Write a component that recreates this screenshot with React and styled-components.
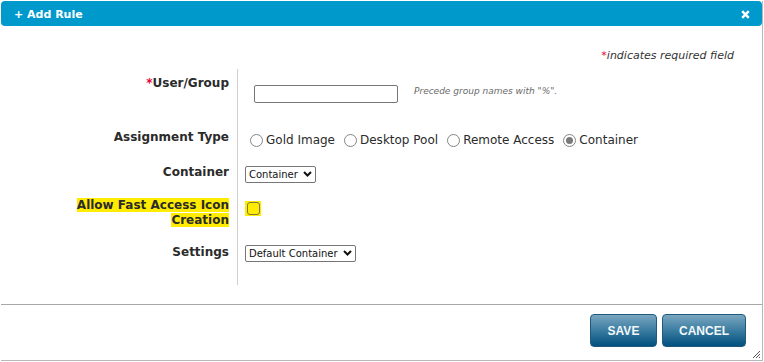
import React, { useState } from 'react';
import styled, { createGlobalStyle } from 'styled-components';

const GlobalStyle = createGlobalStyle`
  body {
    margin: 0;
    background: #fff;
    font-family: "DejaVu Sans", Verdana, sans-serif;
    color: #2b2b2b;
  }
`;

const Page = styled.div`
  padding: 1px 0 0 1px;
`;

const Dialog = styled.div`
  position: relative;
  width: 761px;
  height: 359px;
  border-right: 1px solid #b8b8b8;
  border-bottom: 1px solid #b8b8b8;
  display: flex;
  flex-direction: column;
  background: #fff;
`;

const Header = styled.div`
  height: 25px;
  flex: none;
  box-sizing: border-box;
  background: #0099cc;
  border-radius: 4px;
  display: flex;
  align-items: center;
  justify-content: space-between;
  padding: 1px 12px 0 13px;
  color: #fff;
  font-size: 11px;
  font-weight: bold;
`;

const CloseButton = styled.button`
  border: none;
  background: none;
  padding: 0;
  display: flex;
  cursor: pointer;
`;

const Body = styled.div`
  flex: 1;
  padding-top: 23px;
`;

const RequiredNote = styled.div`
  text-align: right;
  padding-right: 28px;
  font-size: 11px;
  line-height: 14px;
  font-style: italic;
  color: #333;
  margin-bottom: 6px;
`;

const Star = styled.span`
  color: #e8003a;
  font-style: normal;
`;

const Row = styled.div`
  display: grid;
  grid-template-columns: 237px 1fr;
  height: ${({ h }) => h}px;
`;

const LabelCell = styled.div`
  border-right: 1px solid #cfcfcf;
  text-align: right;
  padding: ${({ top }) => top || 0}px 8px 0 70px;
  font-size: 12px;
  line-height: ${({ lh }) => lh || 16}px;
  font-weight: bold;
  color: #2b2b2b;
`;

const Highlight = styled.span`
  background: #ffec00;
`;

const FieldCell = styled.div`
  padding: ${({ top }) => top || 0}px 0 0 7px;
  display: flex;
  align-items: flex-start;
`;

const TextInput = styled.input`
  width: 144px;
  height: 18px;
  box-sizing: border-box;
  margin: 0 0 0 9px;
  border: 1px solid #767676;
  border-radius: 2px;
  font: 12px "DejaVu Sans", sans-serif;
`;

const Hint = styled.span`
  margin-left: 16px;
  margin-top: 1px;
  font-size: 9px;
  font-style: italic;
  color: #6a6a6a;
`;

const RadioGroup = styled.div`
  display: flex;
  align-items: center;
  gap: 9px;
  margin-left: 5px;
  font-size: 12px;
  line-height: 16px;
`;

const RadioLabel = styled.label`
  display: flex;
  align-items: center;
  gap: 3px;
  color: #2b2b2b;
`;

const Radio = styled.input.attrs({ type: 'radio' })`
  appearance: none;
  margin: 0;
  width: 13px;
  height: 13px;
  border: 1px solid #858585;
  border-radius: 50%;
  box-sizing: border-box;
  background: #fff;
  display: grid;
  place-items: center;

  &:checked::after {
    content: '';
    width: 7px;
    height: 7px;
    border-radius: 50%;
    background: #7a7a7a;
  }
`;

const SelectWrap = styled.span`
  position: relative;
  display: inline-flex;
`;

const Select = styled.select`
  appearance: none;
  height: 17px;
  box-sizing: border-box;
  border: 1px solid #767676;
  border-radius: 2px;
  background: #fff;
  font: 10px "DejaVu Sans", sans-serif;
  color: #111;
  padding: 0 0 0 3px;
  width: ${({ w }) => w}px;
`;

const Chevron = styled.svg`
  position: absolute;
  right: 4px;
  top: 5px;
  pointer-events: none;
`;

const CheckHighlight = styled.span`
  display: inline-flex;
  background: #ffec00;
  padding: 1px 1px 1px 2px;
`;

const Checkbox = styled.input.attrs({ type: 'checkbox' })`
  appearance: none;
  margin: 0;
  width: 13px;
  height: 13px;
  box-sizing: border-box;
  border: 1px solid #7a7a3a;
  border-radius: 3px;
  background: #ffec00;
`;

const Footer = styled.div`
  flex: none;
  box-sizing: border-box;
  height: 56px;
  border-top: 1px solid #a8a8a8;
  display: flex;
  justify-content: flex-end;
  align-items: flex-start;
  gap: 5px;
  padding: 9px 16px 0 0;
`;

const Button = styled.button`
  height: 33px;
  padding: 0 16px;
  min-width: ${({ w }) => w}px;
  border: 1px solid #1f5a7c;
  border-radius: 4px;
  background: linear-gradient(to bottom, #7aa6c1 0%, #3a7ca0 50%, #00507e 100%);
  color: #f2f8fc;
  font: bold 12px "Liberation Sans", Arial, sans-serif;
  cursor: pointer;
`;

const Grip = styled.svg`
  position: absolute;
  right: 1px;
  bottom: 1px;
`;

const ChevronIcon = () => (
  <Chevron width="9" height="6" viewBox="0 0 9 6">
    <path d="M1 1l3.5 3.5L8 1" fill="none" stroke="#111" strokeWidth="2" />
  </Chevron>
);

const options = ['Gold Image', 'Desktop Pool', 'Remote Access', 'Container'];

const App = () => {
  const [type, setType] = useState('Container');

  return (
    <Page>
      <GlobalStyle />
      <Dialog>
        <Header>
          <span>+ Add Rule</span>
          <CloseButton aria-label="Close">
            <svg width="9" height="9" viewBox="0 0 9 9">
              <path d="M1.2 1.2l6.6 6.6M7.8 1.2L1.2 7.8" stroke="#fff" strokeWidth="2.4" />
            </svg>
          </CloseButton>
        </Header>
        <Body>
          <RequiredNote>
            <Star>*</Star>indicates required field
          </RequiredNote>
          <Row h={51}>
            <LabelCell top={6}>
              <Star>*</Star>User/Group
            </LabelCell>
            <FieldCell top={16}>
              <TextInput />
              <Hint>Precede group names with "%".</Hint>
            </FieldCell>
          </Row>
          <Row h={35}>
            <LabelCell top={9}>Assignment Type</LabelCell>
            <FieldCell top={12}>
              <RadioGroup>
                {options.map((o) => (
                  <RadioLabel key={o}>
                    <Radio name="type" checked={type === o} onChange={() => setType(o)} />
                    {o}
                  </RadioLabel>
                ))}
              </RadioGroup>
            </FieldCell>
          </Row>
          <Row h={35}>
            <LabelCell top={9}>Container</LabelCell>
            <FieldCell top={11}>
              <SelectWrap>
                <Select w={71} defaultValue="Container">
                  <option>Container</option>
                </Select>
                <ChevronIcon />
              </SelectWrap>
            </FieldCell>
          </Row>
          <Row h={45}>
            <LabelCell top={8} lh={15}>
              <Highlight>Allow Fast Access Icon Creation</Highlight>
            </LabelCell>
            <FieldCell top={11}>
              <CheckHighlight>
                <Checkbox />
              </CheckHighlight>
            </FieldCell>
          </Row>
          <Row h={35}>
            <LabelCell top={9}>Settings</LabelCell>
            <FieldCell top={10}>
              <SelectWrap>
                <Select w={111} defaultValue="Default Container">
                  <option>Default Container</option>
                </Select>
                <ChevronIcon />
              </SelectWrap>
            </FieldCell>
          </Row>
          <Row h={15}>
            <LabelCell />
            <FieldCell />
          </Row>
        </Body>
        <Footer>
          <Button w={67}>SAVE</Button>
          <Button w={83}>CANCEL</Button>
        </Footer>
        <Grip width="10" height="10" viewBox="0 0 10 10">
          <path d="M9 2L2 9M9 5L5 9M9 8L8 9" stroke="#555" strokeWidth="1" />
        </Grip>
      </Dialog>
    </Page>
  );
};

export default App;
